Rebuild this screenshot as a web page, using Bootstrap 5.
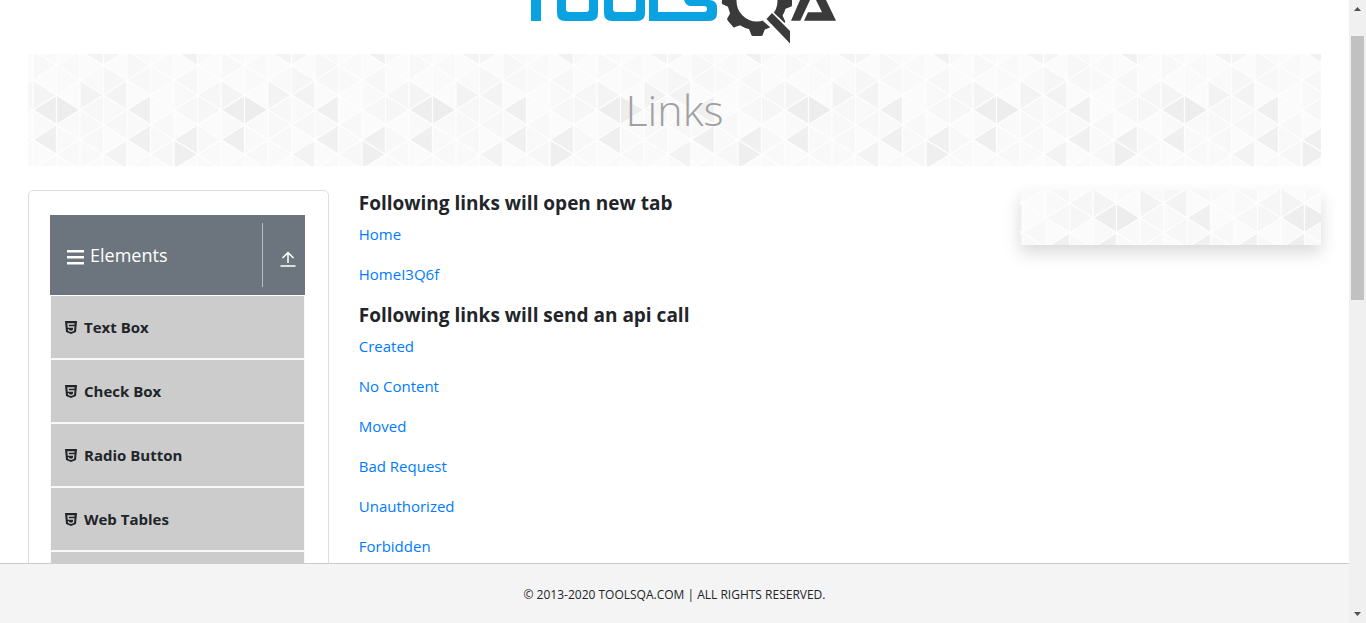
<!DOCTYPE html>
<html lang="en">
<head>
<meta charset="utf-8">
<meta name="viewport" content="width=device-width, initial-scale=1">
<title>ToolsQA</title>
<link href="https://cdn.jsdelivr.net/npm/bootstrap@5.3.0/dist/css/bootstrap.min.css" rel="stylesheet">
<style>
body{font-family:"Open Sans","Noto Sans",sans-serif;font-size:15px;line-height:24px;color:#212529;background:#fff}
a{color:#007bff;text-decoration:none}
.page-view{height:100vh;overflow:hidden}
.brand-strip{height:54px;padding-left:10px}
.brand-strip svg{display:block;width:340px;height:54px}
.page-body{padding:0 28px}
.main-row{--bs-gutter-x:30px}
.tri-pattern{position:relative;overflow:hidden;background:#fcfcfc}
.tri-pattern svg{position:absolute;left:50%;top:50%;transform:translate(-50%,-50%)}
.hero{height:112px}
.hero h1{position:relative;font-size:43px;line-height:64px;font-weight:300;color:#a0a0a0}
.side-card{border:1px solid #dedede;border-radius:5px;padding:24px 23px 24px 21px}
.group-head{width:100%;height:80px;padding:8px 9px 8px 17px;background:#6c757d;color:#fff;border:0;font-size:18px}
.group-head .head-label{gap:6px}
.group-head .toggle-mark{height:64px;border-left:1px solid #bbb;padding-left:17px}
.side-list{padding:0 1px;background:#f8f8f8}
.side-list li{margin:1px 0 2px;height:62px;background:#ccc}
.side-list li+li{margin-top:0}
.side-list a{height:62px;padding-left:14px;gap:7px;color:#212529;font-weight:700}
.link-area h2{font-size:19px;line-height:26px;font-weight:700;margin-bottom:6px}
.link-area p{margin-bottom:16px}
.ad-box{height:55px;box-shadow:0 8px 16px rgba(0,0,0,.15)}
.site-foot{height:60px;background:#f4f4f4;border-top:1px solid #ccc;font-size:12px;padding-top:2px}
.scroll-rail{width:17px;background:#f0f0f0;padding:0 2px 0 2px}
.scroll-rail .grip{height:264px;background:#c1c1c1}
.scroll-rail .tip-end{height:18px}
.scroll-rail .tip-start{height:36px;padding-top:6px}
</style>
</head>
<body>
<svg width="0" height="0" class="d-block position-absolute" aria-hidden="true">
  <defs id="patternDefs"></defs>
</svg>
<div class="page-view d-flex">
  <div class="d-flex flex-column flex-grow-1 overflow-hidden">
    <div class="flex-grow-1 overflow-hidden">
      <header class="brand-strip d-flex justify-content-center">
        <a href="#" aria-label="ToolsQA home">
          <svg viewBox="510 0 340 54">
            <g fill="#0aa2e0">
              <path d="M531 0h10v21h-10z"/>
              <path d="M557 0h9v9q0 3 3 3h17q3 0 3-3V0h9v13q0 8-8 8h-25q-8 0-8-8z"/>
              <path d="M604 0h9v9q0 3 3 3h17q3 0 3-3V0h9v13q0 8-8 8h-25q-8 0-8-8z"/>
              <path d="M649 0h9v12h46q3 0 3-3t-3-3h-13q-5 0-7-6h25q8 0 8 8v5q0 8-8 8h-60z"/>
            </g>
            <g fill="#3a3a3a">
              <g transform="translate(757 1)">
                <circle r="25" fill="none" stroke="#3a3a3a" stroke-width="9"/>
                <path id="tooth" d="M-8 28l2 5q0 2 2 2h8q2 0 2-2l2-5z"/>
                <use href="#tooth" transform="rotate(50)"/><use href="#tooth" transform="rotate(94)"/>
                <use href="#tooth" transform="rotate(-45)"/><use href="#tooth" transform="rotate(-90)"/>
              </g>
              <path d="M770 9l23 22v16l-30-26z" fill="#fff"/>
              <path d="M772 13l18 18v12.500L766.500 19z"/>
              <path d="M791 20.700h9.300L810 0h-10zM804 20.700h32L826 0h-10l6 12.300h-14z"/>
            </g>
          </svg>
        </a>
      </header>
      <main class="page-body">
        <div class="hero tri-pattern d-flex align-items-center justify-content-center mb-4">
          <h1 class="mb-0">Links</h1>
        </div>
        <div class="row main-row">
          <div class="col-3">
            <nav class="side-card" aria-label="Sections">
              <button type="button" class="group-head d-flex align-items-center justify-content-between">
                <span class="head-label d-flex align-items-center">
                  <svg width="17" height="16" class="mt-1" viewBox="0 0 17 16"><path d="M0 1h17v2.600H0zm0 6h17v2.600H0zm0 6h17v2.600H0z" fill="#fff"/></svg>
                  <span>Elements</span>
                </span>
                <span class="toggle-mark d-flex align-items-center">
                  <svg width="16" height="16" class="mt-2" viewBox="0 0 16 16" fill="none" stroke="#fff" stroke-width="1.500"><path d="M8 12V1.500M2.500 7L8 1.500 13.500 7M.5 15h15"/></svg>
                </span>
              </button>
              <ul class="side-list list-unstyled mb-0" id="sideList"></ul>
            </nav>
          </div>
          <div class="col-6 link-area">
            <h2>Following links will open new tab</h2>
            <p><a href="#">Home</a></p>
            <p><a href="#">HomeI3Q6f</a></p>
            <h2>Following links will send an api call</h2>
            <p><a href="#">Created</a></p>
            <p><a href="#">No Content</a></p>
            <p><a href="#">Moved</a></p>
            <p><a href="#">Bad Request</a></p>
            <p><a href="#">Unauthorized</a></p>
            <p><a href="#">Forbidden</a></p>
          </div>
          <div class="col-3">
            <div class="ad-box"><div class="tri-pattern h-100"></div></div>
          </div>
        </div>
      </main>
    </div>
    <footer class="site-foot flex-shrink-0 d-flex align-items-center justify-content-center">
      <span>© 2013-2020 TOOLSQA.COM | ALL RIGHTS RESERVED.</span>
    </footer>
  </div>
  <div class="scroll-rail flex-shrink-0 d-flex flex-column" aria-hidden="true">
    <div class="tip-start"><svg class="d-block mx-auto" width="7" height="6"><path d="M0 5L3.500 1 7 5z" fill="#505050"/></svg></div>
    <div class="grip"></div>
    <div class="tip-end mt-auto"><svg class="d-block mx-auto mt-1" width="7" height="8"><path d="M0 3h7L3.500 7z" fill="#505050"/></svg></div>
  </div>
</div>
<script src="https://cdn.jsdelivr.net/npm/bootstrap@5.3.0/dist/js/bootstrap.bundle.min.js"></script>
<script>
// Side menu entries, closed by a blank row
document.getElementById('sideList').innerHTML =
  ['Text Box', 'Check Box', 'Radio Button', 'Web Tables'].map(function (t) {
    return '<li><a href="#" class="d-flex align-items-center"><svg width="12" height="13" viewBox="0 0 12 13">' +
      '<path d="M0 0h12l-1 11-5 2-5-2z" fill="#212529"/>' +
      '<path d="M9.500 3H3l.3 3h5.500l-.4 3.500L6 10.300l-2.400-.8-.1-1.300" fill="none" stroke="#ccc" stroke-width="1.300"/></svg>' +
      '<span>' + t + '</span></a></li>';
  }).join('') + '<li></li>';

// Triangle lattice: key "strip,row" -> shade
var shades = {
  '0,0': '#eeeeee', '1,0': '#ededed', '4,0': '#f0f0f0', '0,2': '#efefef', '4,2': '#f0f0f0',
  '6,2': '#f0f0f0', '6,3': '#efefef', '6,-4': '#f1f1f1', '0,-1': '#f4f4f4', '2,-1': '#f3f3f3',
  '3,-1': '#f3f3f3', '3,3': '#f3f3f3', '2,-4': '#f3f3f3', '3,-4': '#f5f5f5', '3,-2': '#f6f6f6',
  '0,-3': '#f8f8f8', '4,-3': '#f7f7f7', '4,-2': '#f7f7f7', '6,-2': '#f7f7f7', '7,-1': '#f6f6f6',
  '2,0': '#f7f7f7', '6,0': '#f7f7f7', '7,0': '#f6f6f6', '5,1': '#f8f8f8', '2,1': '#f8f8f8',
  '5,3': '#f7f7f7', '1,3': '#f8f8f8', '2,2': '#f8f8f8', '3,1': '#f7f7f7', '7,2': '#f8f8f8'
};
var W = 23.5, H = 29.7, tile = '';
for (var j = -2; j < 9; j++) for (var m = -4; m <= 4; m++) {
  var x = 16 + j * W, y = 66 + m * H / 2, right = Math.abs(j + m) % 2 === 1;
  var edge = right ? x : x + W, apex = right ? x + W : x;
  var k = ((j + 8) % 8) + ',' + m;
  var c = shades[k] || ((j * 3 + m * 5 + 60) % 4 < 2 ? '#f9f9f9' : '#fbfbfb');
  tile += '<path d="M' + edge + ' ' + (y - H / 2) + 'V' + (y + H / 2) + 'L' + apex + ' ' + y + 'z" fill="' + c + '" stroke="#fefefe" stroke-width="1.2"/>';
}
document.getElementById('patternDefs').innerHTML =
  '<pattern id="tri" width="188" height="132" patternUnits="userSpaceOnUse">' + tile + '</pattern>';
// An odd count of tiles keeps the lattice centred in its box
document.querySelectorAll('.tri-pattern').forEach(function (el) {
  el.insertAdjacentHTML('afterbegin', '<svg width="3948" height="132" aria-hidden="true"><rect width="3948" height="132" fill="url(#tri)"/></svg>');
});
</script>
</body>
</html>
